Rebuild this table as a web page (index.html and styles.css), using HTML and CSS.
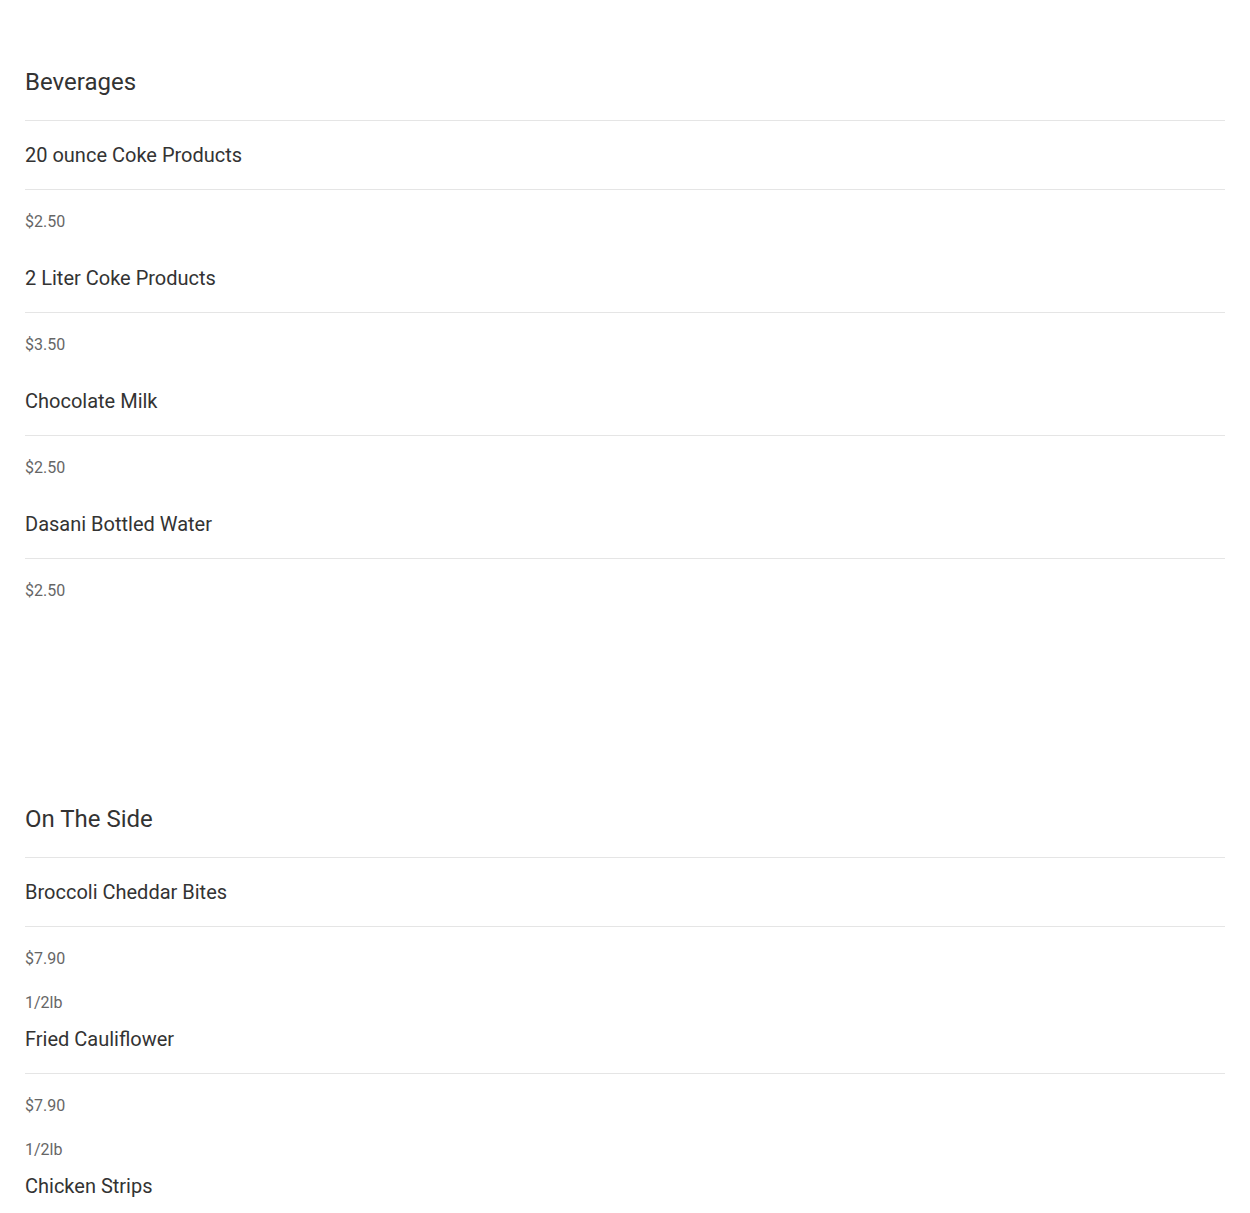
FILE: index.html
```html
<!DOCTYPE html>
<html lang="en">
<head>
<meta charset="utf-8">
<title>Menu</title>
<link rel="stylesheet" href="styles.css">
</head>
<body>
<main class="menu">
  <section class="menu-section">
    <h2 class="section-title">Beverages</h2>
    <ul class="items">
      <li class="item">
        <h3 class="item-name">20 ounce Coke Products</h3>
        <p class="item-price">$2.50</p>
      </li>
      <li class="item">
        <h3 class="item-name">2 Liter Coke Products</h3>
        <p class="item-price">$3.50</p>
      </li>
      <li class="item">
        <h3 class="item-name">Chocolate Milk</h3>
        <p class="item-price">$2.50</p>
      </li>
      <li class="item">
        <h3 class="item-name">Dasani Bottled Water</h3>
        <p class="item-price">$2.50</p>
      </li>
    </ul>
  </section>
  <section class="menu-section">
    <h2 class="section-title">On The Side</h2>
    <ul class="items">
      <li class="item">
        <h3 class="item-name">Broccoli Cheddar Bites</h3>
        <p class="item-price">$7.90</p>
        <p class="item-desc">1/2lb</p>
      </li>
      <li class="item">
        <h3 class="item-name">Fried Cauliflower</h3>
        <p class="item-price">$7.90</p>
        <p class="item-desc">1/2lb</p>
      </li>
      <li class="item">
        <h3 class="item-name">Chicken Strips</h3>
      </li>
    </ul>
  </section>
</main>
</body>
</html>
```
FILE: styles.css
```css
html, body {
  margin: 0;
  padding: 0;
  background: #ffffff;
}
body {
  font-family: Roboto, "Liberation Sans", Arial, sans-serif;
  color: #333333;
}
.menu {
  padding: 68px 25px 40px;
}
.menu-section + .menu-section {
  margin-top: 170px;
}
.section-title {
  margin: 0;
  font-size: 24px;
  line-height: 29px;
  font-weight: 400;
  color: #333333;
  padding-bottom: 23px;
  border-bottom: 1px solid #e5e5e5;
}
.items {
  list-style: none;
  margin: 22px 0 0;
  padding: 0;
}
.item {
  padding-bottom: 15px;
}
.item-name {
  margin: 0;
  font-size: 20px;
  line-height: 24px;
  font-weight: 400;
  color: #333333;
  padding-bottom: 22px;
  border-bottom: 1px solid #e5e5e5;
}
.item-price {
  margin: 22px 0 19px;
  font-size: 16px;
  line-height: 20px;
  color: #666666;
}
.item-desc {
  margin: 24px 0 -1px;
  font-size: 16px;
  line-height: 20px;
  color: #666666;
}
```
